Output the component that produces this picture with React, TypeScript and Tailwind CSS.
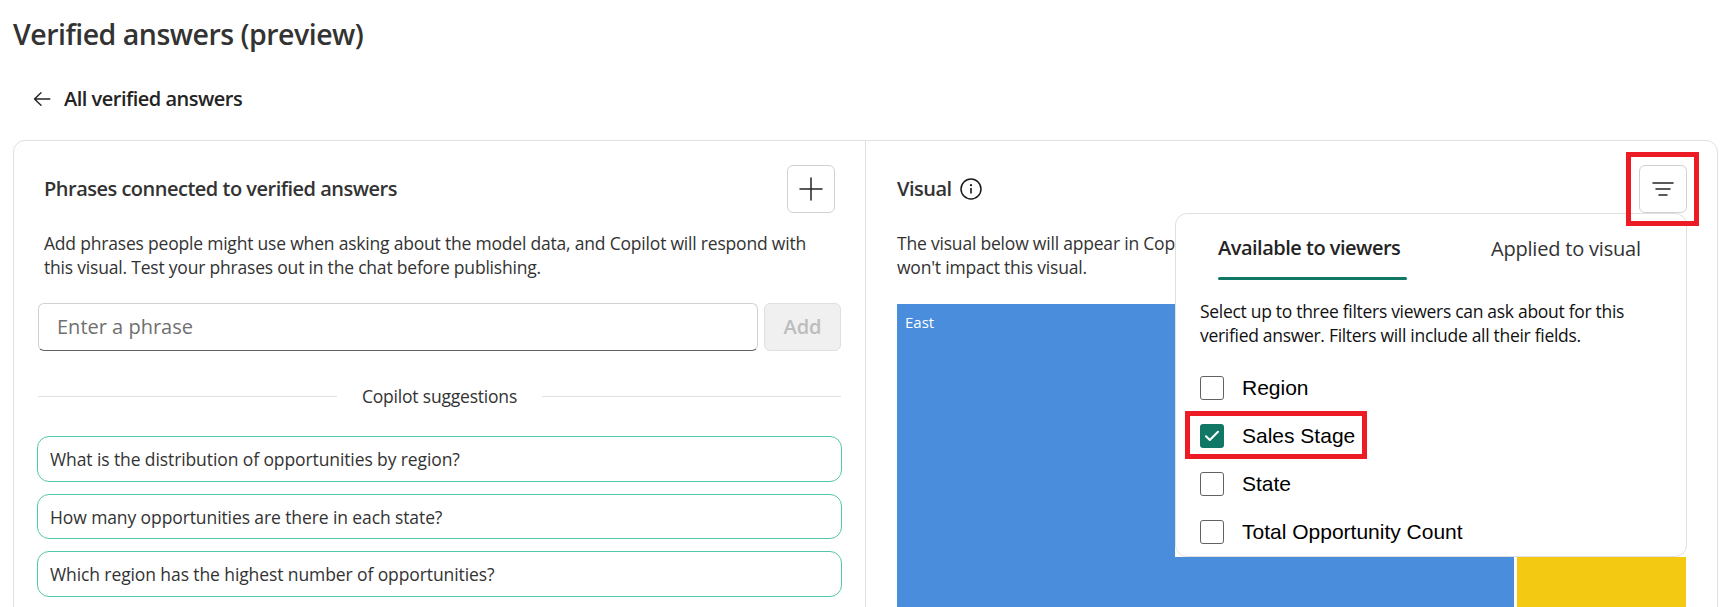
import React from "react";

const suggestions = [
  { text: "What is the distribution of opportunities by region?", box: "h-[46px] mb-3", tracking: "tracking-[-0.1px]" },
  { text: "How many opportunities are there in each state?", box: "h-[45px] mb-3", tracking: "tracking-[-0.1px]" },
  { text: "Which region has the highest number of opportunities?", box: "h-[46px]", tracking: "tracking-[-0.1px]" },
];

const filters = [
  { label: "Region", checked: false },
  { label: "Sales Stage", checked: true },
  { label: "State", checked: false },
  { label: "Total Opportunity Count", checked: false },
];

function BackArrow() {
  return (
    <svg width="18" height="16" viewBox="0 0 18 16" fill="none" stroke="#242424" strokeWidth="1.4" strokeLinecap="round" strokeLinejoin="round">
      <path d="M16.8 8H1.6M8 1.8L1.5 8l6.5 6.2" />
    </svg>
  );
}

function PlusIcon() {
  return (
    <svg width="24" height="24" viewBox="0 0 24 24" fill="none" stroke="#242424" strokeWidth="1.5" strokeLinecap="round">
      <path d="M12 1v22M1 12h22" />
    </svg>
  );
}

function FilterIcon() {
  return (
    <svg width="24" height="24" viewBox="0 0 24 24" fill="none" stroke="#242424" strokeWidth="1.5" strokeLinecap="round">
      <path d="M2 6h20M5 12h14M8 18h8" />
    </svg>
  );
}

function InfoIcon() {
  return (
    <svg width="22" height="22" viewBox="0 0 22 22" fill="none">
      <circle cx="11" cy="11" r="10" stroke="#1a1a1a" strokeWidth="1.5" />
      <path d="M11 10v5.4" stroke="#1a1a1a" strokeWidth="1.6" />
      <circle cx="11" cy="7.2" r="1.1" fill="#1a1a1a" />
    </svg>
  );
}

function FilterMenu() {
  return (
    <div className="absolute left-[1175px] top-[213px] h-[344px] w-[512px] bg-white">
      <div className="h-full rounded-xl border border-[#e0e0e0] pl-6">
        <div className="flex h-[66px] pl-[18px]">
          <div className="flex h-full w-[189px] flex-col justify-between">
            <span className="mt-[20px] text-[20px] leading-7 font-semibold tracking-[-0.5px] whitespace-nowrap text-[#242424]">Available to viewers</span>
            <span className="h-[3px] rounded-full bg-[#117865]" />
          </div>
          <span className="mt-[21px] ml-[84px] text-[20px] leading-7 tracking-[-0.2px] whitespace-nowrap text-[#333]">Applied to visual</span>
        </div>
        <p className="mt-[19px] text-[17.5px] leading-6 whitespace-nowrap text-[#111]">
          <span className="tracking-[-0.3px]">Select up to three filters viewers can ask about for this</span>
          <br />
          <span className="tracking-[-0.3px]">verified answer. Filters will include all their fields.</span>
        </p>
        <div className="mt-[17px] flex flex-col">
          {filters.map((f) => (
            <div key={f.label} className="flex h-12 items-center gap-[18px]">
              {f.checked ? (
                <span className="flex size-6 items-center justify-center rounded-[3px] bg-[#117865]">
                  <svg width="16" height="14" viewBox="0 0 16 14" fill="none" stroke="white" strokeWidth="2" strokeLinecap="round" strokeLinejoin="round">
                    <path d="M2 7.3L5.8 11 14 2.8" />
                  </svg>
                </span>
              ) : (
                <span className="size-6 rounded-[3px] border border-[#616161]" />
              )}
              <span className="font-['Liberation_Sans',Arial,sans-serif] text-[21px] leading-6 whitespace-nowrap text-black">{f.label}</span>
            </div>
          ))}
        </div>
      </div>
      <div className="absolute top-[198px] left-[10px] h-12 w-[182px] border-5 border-[#ed1c24]" />
    </div>
  );
}

export default function App() {
  return (
    <div className="relative h-[607px] w-[1723px] overflow-hidden bg-white font-['Open_Sans',sans-serif] text-[#333]">
      <h1 className="pt-[14px] pl-[13px] text-[28.5px] leading-10 font-semibold tracking-[-0.5px] whitespace-nowrap">Verified answers (preview)</h1>
      <div className="mt-[31px] flex h-7 items-center pl-[33px]">
        <BackArrow />
        <span className="ml-[13px] text-[20px] leading-7 font-semibold tracking-[-0.5px] whitespace-nowrap text-[#242424]">All verified answers</span>
      </div>

      <main className="mt-[27px] ml-[13px] flex h-[520px] w-[1705px] rounded-xl border border-[#e0e0e0]">
        <section className="w-[852px] border-r border-[#e0e0e0] pt-6 pl-6">
          <div className="flex h-12 w-[797px] items-center justify-between pl-[6px]">
            <h2 className="text-[20px] leading-7 font-semibold tracking-[-0.5px] whitespace-nowrap">Phrases connected to verified answers</h2>
            <button className="flex size-12 items-center justify-center rounded-md border border-[#d1d1d1]">
              <PlusIcon />
            </button>
          </div>
          <p className="mt-[18px] pl-[6px] text-[17.5px] leading-6 whitespace-nowrap">
            <span className="tracking-[-0.2px]">Add phrases people might use when asking about the model data, and Copilot will respond with</span>
            <br />
            <span className="tracking-[-0.2px]">this visual. Test your phrases out in the chat before publishing.</span>
          </p>
          <div className="mt-6 flex h-12 gap-[6px]">
            <div className="flex w-[720px] items-center rounded-md border border-[#d1d1d1] border-b-[#616161] pl-[18px]">
              <span className="text-[20px] leading-7 whitespace-nowrap text-[#707070]">Enter a phrase</span>
            </div>
            <button className="flex w-[77px] items-center justify-center rounded-md border border-[#e0e0e0] bg-[#f0f0f0] text-[20px] leading-7 font-semibold text-[#bdbdbd]">Add</button>
          </div>
          <div className="mt-[33px] flex h-6 w-[803px] items-center">
            <span className="h-px w-[299px] bg-[#e0e0e0]" />
            <span className="w-[205px] text-center text-[17.5px] leading-6 tracking-[-0.2px] whitespace-nowrap">Copilot suggestions</span>
            <span className="h-px w-[299px] bg-[#e0e0e0]" />
          </div>
          <div className="mt-7 -ml-px w-[805px]">
            {suggestions.map((s) => (
              <div key={s.text} className={`flex items-center rounded-xl border border-[#52c7aa] pl-3 ${s.box}`}>
                <span className={`text-[17.5px] leading-6 whitespace-nowrap ${s.tracking}`}>{s.text}</span>
              </div>
            ))}
          </div>
        </section>

        <section className="flex-1 pt-6 pl-[31px]">
          <div className="flex h-12 w-[790px] items-center">
            <h2 className="text-[20px] leading-7 font-semibold tracking-[-0.5px]">Visual</h2>
            <span className="ml-2">
              <InfoIcon />
            </span>
            <button className="ml-auto flex size-12 items-center justify-center rounded-md border border-[#d1d1d1]">
              <FilterIcon />
            </button>
          </div>
          <p className="mt-[18px] text-[17.5px] leading-6 tracking-[-0.2px] whitespace-nowrap">
            The visual below will appear in Copilot. Changes made
            <br />
            won't impact this visual.
          </p>
          <div className="mt-[25px] flex h-[360px] gap-[3px]">
            <div className="w-[617px] bg-[#4a8ddc] pt-2 pl-2 text-[15px] leading-5 text-white">East</div>
            <div className="w-[169px] bg-[#f3c911]" />
          </div>
        </section>
      </main>

      <FilterMenu />
      <div className="absolute top-[152px] left-[1626px] h-[74px] w-[73px] border-5 border-[#ed1c24]" />
    </div>
  );
}
